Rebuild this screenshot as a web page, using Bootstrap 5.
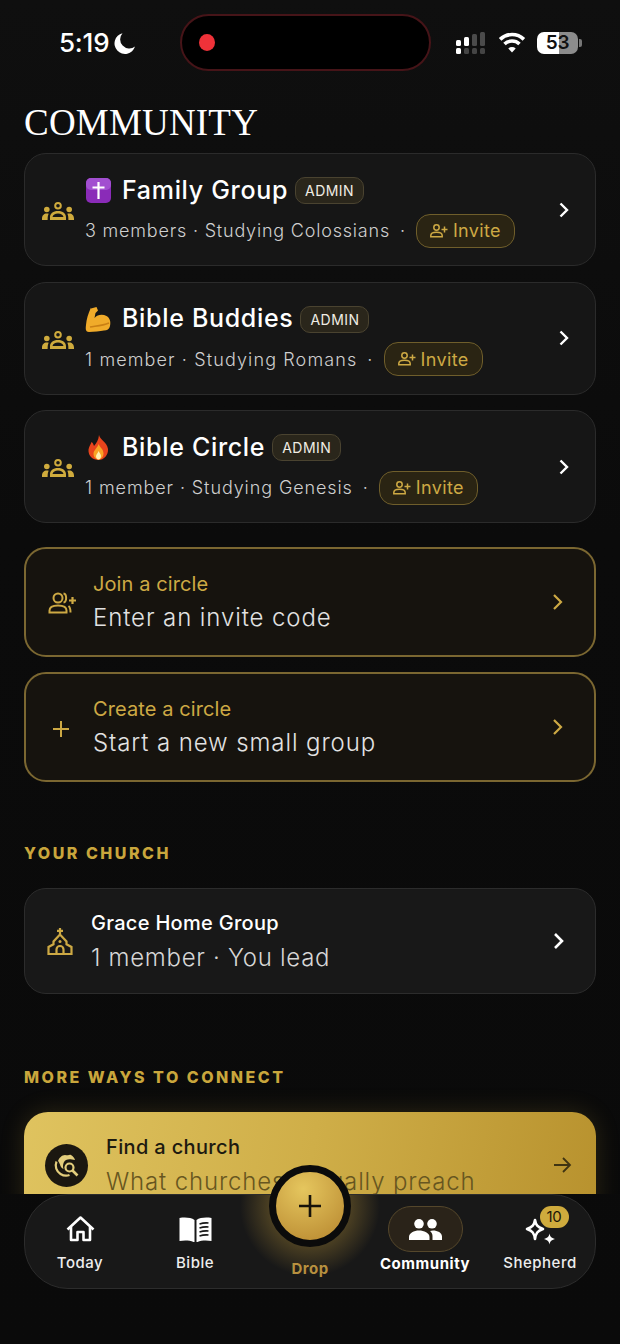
<!DOCTYPE html>
<html lang="en">
<head>
  <meta charset="UTF-8">
  <meta name="viewport" content="width=device-width, initial-scale=1.0">
  <title>Community</title>
  <link href="https://cdn.jsdelivr.net/npm/bootstrap@5.3.3/dist/css/bootstrap.min.css" rel="stylesheet">
  <style>
    html, body { background: #0b0b0b; }
    body { font-family: Inter, "Liberation Sans", sans-serif; color: #fff; overflow: hidden; }
    .phone-screen { width: 620px; height: 1344px; overflow: hidden; background: linear-gradient(180deg, #0f0f0f 0, #0b0b0b 40%, #0a0a0a 100%); }

    .status-bar { height: 86px; padding-top: 14px; }
    .status-left { width: 180px; padding-left: 59px; height: 57px; font-size: 26px; font-weight: 500; letter-spacing: -.2px; }
    .status-left svg { margin-left: 5px; }
    .island { width: 251px; height: 57px; background: #000; border: 2px solid #461418; border-radius: 29px; padding-left: 17px; }
    .island-dot { width: 16px; height: 17px; border-radius: 50%; background: #ef3239; }
    .status-right { padding-left: 25px; height: 57px; }
    .battery-shell { width: 41px; height: 22px; margin-left: 11px; border-radius: 7px; background: linear-gradient(90deg, #fff 0 53%, #8c8c8c 53% 100%); color: #111; font-size: 19px; font-weight: 600; line-height: 22px; text-align: center; letter-spacing: -.3px; }
    .battery-tip { width: 3px; height: 8px; margin-left: 1px; background: #777; border-radius: 0 2px 2px 0; }

    .main-area { height: 1108px; overflow: hidden; padding: 0 24px; }
    .page-title { font-family: "Liberation Serif", serif; font-size: 37px; font-weight: 400; line-height: 40px; letter-spacing: .2px; margin: 0; padding-top: 17px; height: 67px; }

    .circle-row { height: 113px; background: #161616; border: 1px solid #2b2b2b; border-radius: 22px; margin-bottom: 15.5px; padding: 0 25px 0 17px; }
    .row-icon { width: 33px; flex: none; }
    .row-body { padding-left: 10px; }
    .row-title { height: 38px; }
    .emoji-box { width: 27px; height: 27px; flex: none; margin-right: 10px; }
    .title-text { font-size: 25px; font-weight: 500; letter-spacing: .68px; white-space: nowrap; }
    .admin-pill { height: 27px; margin-left: 7px; padding: 0 9px; border: 1px solid #4a4330; background: #2a261b; border-radius: 10px; font-size: 14px; line-height: 25px; letter-spacing: .45px; color: #f0ede4; }
    .row-sub { margin-top: 4px; font-size: 18px; font-weight: 300; color: #cfcfcf; letter-spacing: .8px; white-space: nowrap; height: 34px; }
    .row-sub.sub-romans { letter-spacing: 1.12px; }
    .row-sub.sub-genesis { letter-spacing: .9px; }
    .row-sub .dot-sep { margin: 0 10px; }
    .invite-pill { height: 34px; padding: 0 13px; border: 1.5px solid #6f5e2b; background: #2a2413; border-radius: 14px; color: #cda944; font-size: 18px; font-weight: 400; letter-spacing: .35px; }
    .invite-pill svg { margin-right: 5px; }
    .row-chevron { margin-left: auto; flex: none; }

    .action-row { height: 110px; background: #16130e; border: 2px solid #7b6731; border-radius: 22px; margin-bottom: 15px; padding: 0 30px 0 22px; }
    .action-row.first-action { margin-top: 24px; }
    .action-icon { width: 45px; flex: none; }
    .action-text { padding-top: 2px; }
    .action-label { font-size: 20px; color: #cda944; letter-spacing: .1px; line-height: 26px; }
    .action-sub { font-size: 24px; font-weight: 300; color: #e2e2e2; letter-spacing: .9px; line-height: 34px; margin-top: 4px; }

    .section-label { font-size: 16px; font-weight: 800; color: #c9a63c; letter-spacing: 2.5px; line-height: 20px; margin: 0; }
    .church-heading { margin-top: 61px; margin-bottom: 25px; }
    .more-heading { margin-top: 73px; }
    .church-row { height: 106px; background: #181818; border: 1px solid #2c2c2c; border-radius: 22px; padding: 0 30px 0 22px; }
    .church-icon { width: 44px; flex: none; }
    .stack-text { padding-top: 3px; }
    .church-name { font-size: 20px; font-weight: 500; letter-spacing: .3px; line-height: 26px; }
    .church-sub { font-size: 24px; font-weight: 300; color: #d6d6d6; letter-spacing: .7px; line-height: 34px; margin-top: 5px; }

    .find-row { height: 106px; border-radius: 24px 24px 0 0; background: linear-gradient(100deg, #dfc35f 0, #cfae48 50%, #b8922e 100%); box-shadow: 0 0 24px rgba(200, 165, 60, .18); padding: 0 24px 0 21px; margin-top: 25px; }
    .find-icon { width: 43px; height: 43px; flex: none; border-radius: 50%; background: #1b1710; margin-right: 18px; }
    .find-name { font-size: 20px; font-weight: 500; color: #1d1a10; letter-spacing: .35px; line-height: 26px; }
    .find-sub { font-size: 24px; font-weight: 300; color: #675620; letter-spacing: .85px; line-height: 34px; margin-top: 5px; white-space: nowrap; }

    .tab-bar { height: 95px; margin: 0 24px; background: #181818; border: 1px solid #2c2c2c; border-radius: 44px; }
    .tab-item { flex: 0 0 115px; width: 115px; height: 93px; font-size: 15px; font-weight: 500; letter-spacing: .5px; color: #eee; }
    .tab-icon { height: 45px; margin-top: 11px; }
    .tab-label { margin-top: 2px; line-height: 20px; white-space: nowrap; }
    .tab-item.active-tab .tab-label { font-weight: 700; color: #fff; letter-spacing: .55px; }
    .active-chip { width: 75px; height: 46px; border-radius: 23px; background: #2a2319; border: 1px solid #55472b; }
    .tab-item.drop-tab .tab-label { margin-top: 8px; color: #b68f3f; font-weight: 700; }
    .drop-slot { height: 45px; margin-top: 11px; }
    .drop-glow { position: absolute; left: 50%; top: 0; width: 140px; height: 93px; margin-left: -70px; background: radial-gradient(circle 70px at 50% 12%, rgba(200, 160, 60, .34) 50%, rgba(200, 160, 60, 0) 100%); pointer-events: none; }
    .drop-button { position: absolute; left: 50%; top: -30px; width: 82px; height: 82px; margin-left: -41px; border-radius: 50%; border: 7px solid #0b0b0b; background: radial-gradient(circle at 40% 25%, #e5c65e, #bd8f35 85%); }
    .count-badge { position: absolute; top: 11px; left: 57px; width: 29px; height: 22px; border-radius: 11px; background: #cfab3d; color: #1b1608; font-size: 15px; font-weight: 400; line-height: 22px; text-align: center; letter-spacing: -.3px; }
    .spark-icon { margin-top: 5px; }
  </style>
</head>
<body>
  <div class="phone-screen d-flex flex-column">

    <div class="status-bar d-flex align-items-start">
      <div class="status-left d-flex align-items-center">
        <span>5:19</span>
        <svg width="22" height="22" viewBox="0 0 22 22"><path d="M8.5 1.2A10.5 10.5 0 1 0 21 14.6 9.2 9.2 0 0 1 8.5 1.2Z" fill="#fff"/></svg>
      </div>
      <div class="island d-flex align-items-center"><span class="island-dot"></span></div>
      <div class="status-right d-flex align-items-center">
        <svg width="34" height="22" viewBox="0 0 34 22">
          <rect x="0" y="8" width="5" height="6" rx="1.5" fill="#fff"/><rect x="8" y="5" width="5" height="9" rx="1.5" fill="#fff"/>
          <rect x="16" y="2" width="5" height="12" rx="1.5" fill="#4b4b4b"/><rect x="24" y="0" width="5" height="14" rx="1.5" fill="#4b4b4b"/>
          <rect x="0" y="16" width="5" height="6" rx="1.5" fill="#fff"/><rect x="8" y="16" width="5" height="6" rx="1.5" fill="#444"/>
          <rect x="16" y="16" width="5" height="6" rx="1.5" fill="#444"/><rect x="24" y="16" width="5" height="6" rx="1.5" fill="#444"/>
        </svg>
        <svg class="ms-2" width="28" height="21" viewBox="0 0 27 21" fill="none" stroke="#fff" stroke-width="3.6">
          <path d="M1.6 7.4a17 17 0 0 1 23.8 0"/><path d="M6 12a11 11 0 0 1 15 0"/><path d="M13.5 20.5 9.8 16.4a5.4 5.4 0 0 1 7.4 0Z" fill="#fff" stroke="none"/>
        </svg>
        <div class="battery-shell">53</div>
        <span class="battery-tip"></span>
      </div>
    </div>

    <div class="main-area">
      <h1 class="page-title">COMMUNITY</h1>

      <div class="circle-row d-flex align-items-center">
        <div class="row-icon"><svg width="32" height="18" viewBox="0 0 32 18"><use href="#ico-group"/></svg></div>
        <div class="row-body">
          <div class="row-title d-flex align-items-center">
            <svg class="emoji-box" viewBox="0 0 27 27"><rect x="1" y="1" width="25" height="25" rx="5" fill="#8a2bb8"/><rect x="1" y="1" width="25" height="12" rx="5" fill="#a24fd0"/><path d="M13.5 5v17M7.5 10.5h12" stroke="#fff" stroke-width="2.2"/></svg>
            <span class="title-text">Family Group</span>
            <span class="admin-pill">ADMIN</span>
          </div>
          <div class="row-sub d-flex align-items-center">
            <span>3 members · Studying Colossians</span><span class="dot-sep">·</span>
            <span class="invite-pill d-flex align-items-center"><svg width="18" height="14" viewBox="0 0 18 14"><use href="#ico-invite"/></svg>Invite</span>
          </div>
        </div>
        <svg class="row-chevron" width="12" height="16" viewBox="0 0 12 16"><path d="M2.5 1.5 9 8l-6.5 6.5" fill="none" stroke="#fff" stroke-width="2.4"/></svg>
      </div>

      <div class="circle-row d-flex align-items-center">
        <div class="row-icon"><svg width="32" height="18" viewBox="0 0 32 18"><use href="#ico-group"/></svg></div>
        <div class="row-body">
          <div class="row-title d-flex align-items-center">
            <svg class="emoji-box" viewBox="0 0 27 27"><path d="M6 2.5 11.500 1 13 4.500 10.500 7 9.500 12c3-3.500 8-4 12-2 3.500 2 4.500 6 3.500 10-.5 3-3 4.500-6 4.500-4 .5-10 1.500-15 1.500-3.500 0-3.500-3-3-7 .5-6 2-11 5-17.500Z" fill="#f0ab2a"/><path d="M5 21c5-1 12-1 19-4" stroke="#c97f14" stroke-width="1.400" fill="none"/></svg>
            <span class="title-text">Bible Buddies</span>
            <span class="admin-pill">ADMIN</span>
          </div>
          <div class="row-sub sub-romans d-flex align-items-center">
            <span>1 member · Studying Romans</span><span class="dot-sep">·</span>
            <span class="invite-pill d-flex align-items-center"><svg width="18" height="14" viewBox="0 0 18 14"><use href="#ico-invite"/></svg>Invite</span>
          </div>
        </div>
        <svg class="row-chevron" width="12" height="16" viewBox="0 0 12 16"><path d="M2.5 1.5 9 8l-6.5 6.5" fill="none" stroke="#fff" stroke-width="2.4"/></svg>
      </div>

      <div class="circle-row d-flex align-items-center">
        <div class="row-icon"><svg width="32" height="18" viewBox="0 0 32 18"><use href="#ico-group"/></svg></div>
        <div class="row-body">
          <div class="row-title d-flex align-items-center">
            <svg class="emoji-box" viewBox="0 0 27 27"><path d="M14 1c1 5 8 7 9 14 .5 6-4 11-9.500 11S3 22 3.500 15.500C4 12 6 10 6.500 8c1.500 1 2 2.500 2.500 4 2.500-3 4.500-6 5-11Z" fill="#e8441c"/><path d="M13.500 10c1 3 5 5 5 9.500 0 3.500-2.500 6-5 6s-5-2.500-5-5.500c0-4 4-6 5-10Z" fill="#f9a325"/><path d="M13.500 17c.8 2 2.500 3 2.500 5 0 2-1.200 3.500-2.500 3.500S11 24 11 22.500c0-2 2-3.500 2.500-5.500Z" fill="#fff0b5"/></svg>
            <span class="title-text">Bible Circle</span>
            <span class="admin-pill">ADMIN</span>
          </div>
          <div class="row-sub sub-genesis d-flex align-items-center">
            <span>1 member · Studying Genesis</span><span class="dot-sep">·</span>
            <span class="invite-pill d-flex align-items-center"><svg width="18" height="14" viewBox="0 0 18 14"><use href="#ico-invite"/></svg>Invite</span>
          </div>
        </div>
        <svg class="row-chevron" width="12" height="16" viewBox="0 0 12 16"><path d="M2.5 1.5 9 8l-6.500 6.500" fill="none" stroke="#fff" stroke-width="2.4"/></svg>
      </div>

      <div class="action-row first-action d-flex align-items-center">
        <div class="action-icon">
          <svg width="30" height="22" viewBox="0 0 30 22" fill="none" stroke="#cda944" stroke-width="2"><circle cx="10" cy="6" r="4.500"/><path d="M1.500 20.500v-2c0-3.500 4-5 8.500-5s8.500 1.500 8.500 5v2Z"/><path d="M15.500 1.500c3.500.5 3.500 8.500 0 9M20.500 14c1.500 1 2 3 2 6.500"/><path d="M24.500 5v7M21 8.500h7" stroke-width="2.200"/></svg>
        </div>
        <div class="action-text flex-grow-1">
          <div class="action-label">Join a circle</div>
          <div class="action-sub">Enter an invite code</div>
        </div>
        <svg width="12" height="18" viewBox="0 0 12 18"><path d="M2 2l7 7-7 7" fill="none" stroke="#cda944" stroke-width="2.200"/></svg>
      </div>

      <div class="action-row d-flex align-items-center">
        <div class="action-icon ps-1">
          <svg width="18" height="18" viewBox="0 0 18 18"><path d="M9 1v16M1 9h16" stroke="#cda944" stroke-width="2"/></svg>
        </div>
        <div class="action-text flex-grow-1">
          <div class="action-label">Create a circle</div>
          <div class="action-sub">Start a new small group</div>
        </div>
        <svg width="12" height="18" viewBox="0 0 12 18"><path d="M2 2l7 7-7 7" fill="none" stroke="#cda944" stroke-width="2.200"/></svg>
      </div>

      <h2 class="section-label church-heading">YOUR CHURCH</h2>
      <div class="church-row d-flex align-items-center">
        <div class="church-icon">
          <svg width="26" height="27" viewBox="0 0 26 27" fill="none" stroke="#cda944" stroke-width="2.200"><path d="M13 0v6M10 2.800h6"/><path d="M13 6.500 6.500 13.500v2.800L1.500 19v7h23v-7l-5-2.700v-2.800Z"/><path d="M9.500 26v-4.500a3.500 3.500 0 0 1 7 0V26"/><circle cx="13" cy="13.500" r="1.500" fill="#cda944" stroke="none"/></svg>
        </div>
        <div class="stack-text flex-grow-1">
          <div class="church-name">Grace Home Group</div>
          <div class="church-sub">1 member · You lead</div>
        </div>
        <svg width="12" height="18" viewBox="0 0 12 18"><path d="M2 2l7 7-7 7" fill="none" stroke="#fff" stroke-width="2.600"/></svg>
      </div>

      <h2 class="section-label more-heading">MORE WAYS TO CONNECT</h2>
      <div class="find-row d-flex align-items-center">
        <div class="find-icon d-flex align-items-center justify-content-center">
          <svg width="27" height="27" viewBox="0 0 27 27" fill="none" stroke="#e3cd7c" stroke-width="2.200"><path d="M3.500 9.500c-2 5 0 10 4 12.500 3 1.800 6.500 2 9 1"/><path fill="#e3cd7c" stroke="none" d="M5 9c1-3 4-6 7-6 1 0 2 .5 3 .2 1-.3 2-.8 3-.2 2 1 3.500 3 4 5-1-.3-2-.2-3-.5-2-.4-4-.5-6 .5s-3 3.500-3 6c-.1 1 .3 2 .5 3-2-1-3-2.500-3.500-4.500C6.500 11.500 6 10 5 9Z"/><circle cx="16.500" cy="15.500" r="4"/><path d="M19.500 18.500l5 5" stroke-width="2.600"/></svg>
        </div>
        <div class="stack-text flex-grow-1">
          <div class="find-name">Find a church</div>
          <div class="find-sub">What churches actually preach</div>
        </div>
        <svg width="19" height="18" viewBox="0 0 19 18"><path d="M1 9h16M10 2l7 7-7 7" fill="none" stroke="#3f3412" stroke-width="1.800"/></svg>
      </div>
    </div>

    <nav class="tab-bar row g-0 flex-nowrap justify-content-center position-relative">
      <div class="drop-glow"></div>
      <div class="tab-item d-flex flex-column align-items-center">
        <div class="tab-icon d-flex align-items-center">
          <svg width="29" height="26" viewBox="0 0 29 26" fill="none" stroke="#fff" stroke-width="2.600" stroke-linejoin="round"><path d="M1.500 13.500 14.500 1.500l13 12"/><path d="M5 11v13h6.500v-8h6v8H24V11"/></svg>
        </div>
        <div class="tab-label">Today</div>
      </div>
      <div class="tab-item d-flex flex-column align-items-center">
        <div class="tab-icon d-flex align-items-center">
          <svg width="33" height="26" viewBox="0 0 33 26"><path d="M15.500 4C12 1.500 6 1 .5 2v23c5-1 11-.8 15 1.500Z" fill="#fff"/><path d="M17.500 4C21 1.500 27 1 32.500 2v23c-5-1-11-.8-15 1.500Z" fill="#fff"/><path d="M20.500 8c3-1 6-1.300 9-1M20.500 12c3-1 6-1.300 9-1M20.500 16c3-1 6-1.300 9-1M20.500 20c3-1 6-1.300 9-1" stroke="#181818" stroke-width="1.600" fill="none"/></svg>
        </div>
        <div class="tab-label">Bible</div>
      </div>
      <div class="tab-item drop-tab d-flex flex-column align-items-center">
        <div class="drop-slot"></div>
        <div class="tab-label">Drop</div>
      </div>
      <div class="tab-item active-tab d-flex flex-column align-items-center">
        <div class="tab-icon active-chip d-flex align-items-center justify-content-center">
          <svg width="33" height="21" viewBox="0 0 33 21"><circle cx="10" cy="4.800" r="4.800" fill="#fff"/><circle cx="23" cy="4.800" r="4.800" fill="#fff"/><path d="M0 21v-3c0-4 5-6.500 10-6.500s10.500 2.500 10.500 6.500v3Z" fill="#fff"/><path d="M23.500 21v-4c0-2-1-3.800-2.500-5 1-.3 1.800-.5 3-.5 4.500 0 9 2.200 9 6v3.500Z" fill="#fff"/></svg>
        </div>
        <div class="tab-label">Community</div>
      </div>
      <div class="tab-item position-relative d-flex flex-column align-items-center">
        <div class="tab-icon d-flex align-items-center">
          <svg class="spark-icon" width="31" height="27" viewBox="0 0 31 27" fill="none"><path d="M10 2c.8 5 2.500 7 8 9-5.500 2-7.200 4-8 10-.8-6-2.500-8-8-10 5.500-2 7.200-4 8-9Z" stroke="#fff" stroke-width="2.600" stroke-linejoin="round"/><path d="M24.500 15.500c.6 3 1.600 4.400 5.500 5.500-3.900 1.100-4.900 2.500-5.500 5.500-.6-3-1.600-4.400-5.500-5.500 3.900-1.100 4.900-2.500 5.500-5.500Z" fill="#fff"/></svg>
        </div>
        <div class="tab-label">Shepherd</div>
        <span class="count-badge">10</span>
      </div>
      <div class="drop-button d-flex align-items-center justify-content-center">
        <svg width="24" height="24" viewBox="0 0 24 24"><path d="M12 1v22M1 12h22" stroke="#17130a" stroke-width="2.600"/></svg>
      </div>
    </nav>
  </div>

  <svg width="0" height="0" class="position-absolute">
    <defs>
      <g id="ico-group" fill="#cfab3d">
        <path fill-rule="evenodd" d="M16 0a3.800 3.800 0 1 1 0 7.600A3.800 3.800 0 0 1 16 0Zm0 2a1.800 1.800 0 1 0 0 3.600A1.800 1.800 0 0 0 16 2ZM8 18v-2.500C8 11.500 11 9 16 9s8 2.500 8 6.500V18Zm2.500-3h11c-.5-2-2.500-3.500-5.500-3.500S11 13 10.500 15Z"/>
        <circle cx="4.800" cy="7.500" r="2.800"/><circle cx="27.200" cy="7.500" r="2.800"/>
        <path d="M0 18v-1.500C0 13.500 2 11.500 4.800 11.500c.7 0 1.300.1 1.900.3C6 13 5.600 14.800 5.600 18ZM32 18v-1.500c0-3-2-5-4.800-5-.7 0-1.300.1-1.900.3.700 1.200 1.100 3 1.100 6.200Z"/>
      </g>
      <g id="ico-invite" fill="none" stroke="#cda944" stroke-width="1.500">
        <circle cx="6.500" cy="3.500" r="2.700"/><path d="M.8 12.800v-1.300c0-2 2.600-3.200 5.700-3.200s5.700 1.200 5.700 3.200v1.300Z"/><path d="M14.500 2.500v6M11.500 5.500h6"/>
      </g>
    </defs>
  </svg>
</body>
</html>
